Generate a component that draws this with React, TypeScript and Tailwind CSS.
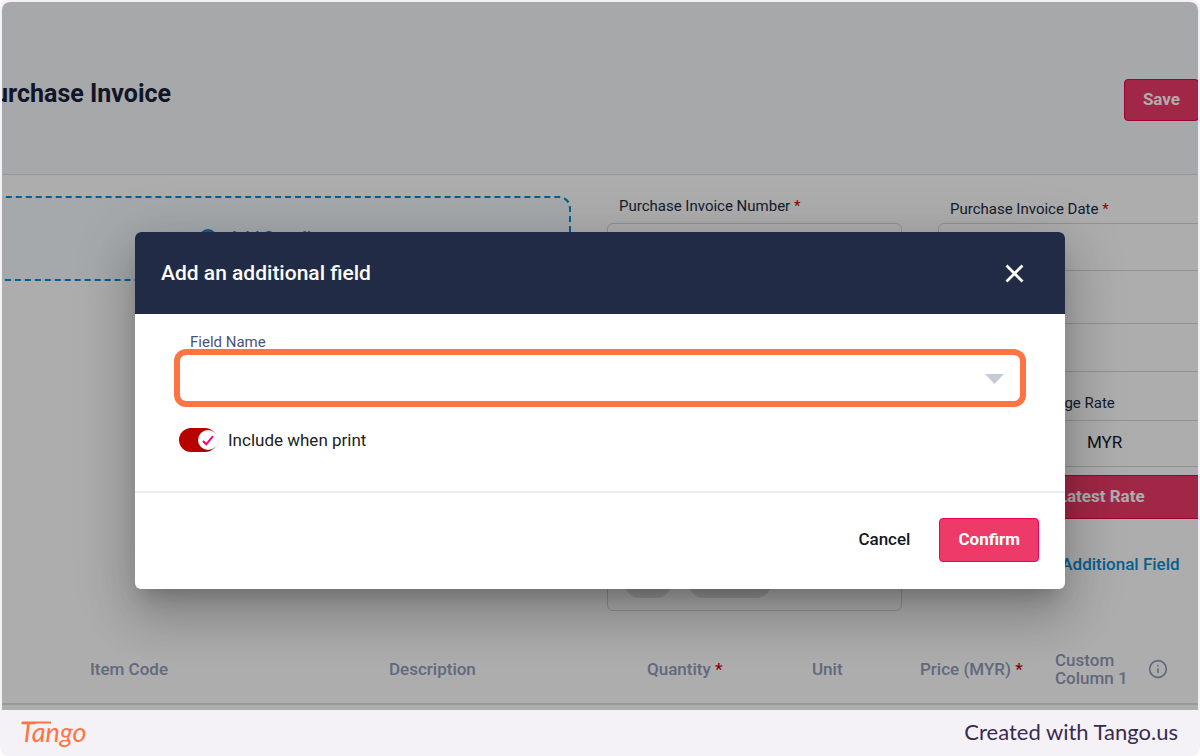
import { useState } from 'react';
import type { ReactNode } from 'react';
import { Info } from 'lucide-react';

type Column = { label: string; required?: boolean; info?: boolean; width: string };

const COLUMNS: Column[] = [
  { label: 'Item Code', width: 'w-[387px]' },
  { label: 'Description', width: 'w-[258px]' },
  { label: 'Quantity', required: true, width: 'w-[165px]' },
  { label: 'Unit', width: 'w-[108px]' },
  { label: 'Price (MYR)', required: true, width: 'w-[135px]' },
  { label: 'Custom Column 1', info: true, width: 'w-auto' },
];

function Required() {
  return <span className="text-[#c80000]"> *</span>;
}

function FieldLabel({ htmlFor, children }: { htmlFor: string; children: ReactNode }) {
  return (
    <label htmlFor={htmlFor} className="block px-3 text-[15px] leading-5 text-[#222b45]">
      {children}
    </label>
  );
}

const fieldBox = 'block w-full rounded-md border border-[#d5d8dc] bg-white px-3 text-[17px] text-[#14181f]';

function PageHeader() {
  return (
    <header className="flex h-[173px] items-start justify-between border-b border-[#dcdfe3] bg-[#f6f8fb]">
      <h1 className="-ml-6 pt-[74px] text-[25px] leading-9 font-bold text-[#1a2138]">Purchase Invoice</h1>
      <button className="-mr-px mt-[77px] h-[42px] rounded border border-[#e4004f] bg-[#ee3a68] px-[18px] text-[17px] font-bold text-white">
        Save
      </button>
    </header>
  );
}

function InvoiceForm() {
  return (
    <section className="grid grid-cols-[569fr_295fr_260fr] gap-x-9 pt-[21px]">
      <div>
        <button className="-ml-12 flex h-[85px] w-[calc(100%+48px)] items-center justify-center gap-3 rounded-xl border-2 border-dashed border-[#0d8ccf] bg-[#f3f9fe] pb-0.5 text-[17px] font-medium text-[#0d8ccf]">
          <span className="h-[18px] w-[18px] rounded-full bg-[#0d8ccf]" />
          Add Supplier
        </button>
      </div>

      <div className="flex flex-col justify-between">
        <div>
          <FieldLabel htmlFor="number">
            Purchase Invoice Number
            <Required />
          </FieldLabel>
          <input id="number" className={`${fieldBox} mt-[7px] h-12`} />
        </div>
        <div className="flex h-[88px] items-end gap-4 rounded-md border border-[#d5d8dc] px-4 pb-3">
          <span className="h-8 w-12 rounded-full bg-[#e0e0e0]" />
          <span className="h-8 w-[84px] rounded-full bg-[#e0e0e0]" />
        </div>
      </div>

      <div className="-mr-10 pt-[3px]">
        <FieldLabel htmlFor="date">
          Purchase Invoice Date
          <Required />
        </FieldLabel>
        <input id="date" className={`${fieldBox} mt-1 h-12`} />
        <input aria-label="Currency" className={`${fieldBox} mt-[52px] h-[49px]`} />
        <div className="mt-[21px] pl-[66px]">
          <FieldLabel htmlFor="rate">Exchange Rate</FieldLabel>
        </div>
        <input id="rate" defaultValue="MYR" className={`${fieldBox} mt-[7px] h-[47px] pb-1 pl-[148px]`} />
        <button className="mt-2 block h-11 w-full rounded border border-[#e4004f] bg-[#ee3a68] pl-[88px] text-left text-[17px] font-bold text-white">
          Get Latest Rate
        </button>
        <a href="#additional" className="mt-[33px] block pl-[75px] text-[17px] leading-6 font-medium text-[#0d8ccf]">
          + Add Additional Field
        </a>
        <div className="h-[35px]" />
      </div>
    </section>
  );
}

function ItemTable() {
  return (
    <table className="mt-[29px] w-full table-fixed border-b-2 border-[#dfe2e6] text-left text-[17px] leading-[18px] text-[#8f9bb8]">
      <thead>
        <tr className="h-[64px]">
          {COLUMNS.map((col, i) => (
            <th key={col.label} className={`pb-[5px] font-medium ${col.width} ${i === 0 ? 'pl-[88px]' : ''}`}>
              {col.info ? (
                <span className="flex items-center gap-5">
                  <span className="w-[73px]">{col.label}</span>
                  <Info size={20} strokeWidth={2} />
                </span>
              ) : (
                col.label
              )}
              {col.required && <Required />}
            </th>
          ))}
        </tr>
      </thead>
    </table>
  );
}

function AdditionalFieldDialog() {
  const [include, setInclude] = useState(true);

  return (
    <div
      role="dialog"
      aria-labelledby="dialog-title"
      className="w-full max-w-[930px] overflow-hidden rounded-md bg-white shadow-[0_14px_19px_-9px_rgba(0,0,0,0.2),0_30px_48px_4px_rgba(0,0,0,0.14),0_11px_58px_10px_rgba(0,0,0,0.12)]"
    >
      <div className="flex h-[82px] items-center justify-between bg-[#222b45] pr-[41px] pl-[26px] text-white">
        <h2 id="dialog-title" className="text-[21px] leading-7 font-medium">
          Add an additional field
        </h2>
        <button aria-label="Close">
          <svg width="19" height="19" viewBox="0 0 19 19" fill="none" stroke="currentColor" strokeWidth="2.8">
            <path d="M1.5 1.5l16 16M17.5 1.5l-16 16" />
          </svg>
        </button>
      </div>

      <div className="h-[179px] border-b-2 border-[#e8edf3] px-[39px] pt-[19px]">
        <label htmlFor="field-name" className="block px-4 text-[15px] leading-[18px] text-[#4a5478]">
          Field Name
        </label>
        <div className="relative -mt-0.5">
          <select
            id="field-name"
            className="block h-[58px] w-full appearance-none rounded-xl border-6 border-[#ff7442] bg-white px-4 outline-none"
          />
          <svg className="pointer-events-none absolute top-[25px] right-[22px]" width="19" height="10" viewBox="0 0 19 10">
            <path d="M0 0h19l-9.500 10z" fill="#c5cad3" />
          </svg>
        </div>
        <label className="mt-[21px] ml-[5px] flex w-fit items-center gap-[11px] text-[17px] leading-6 text-[#222]">
          <span className="relative flex">
            <input
              type="checkbox"
              checked={include}
              onChange={(e) => setInclude(e.target.checked)}
              className="peer h-6 w-[38px] appearance-none rounded-full bg-[#c5cad3] checked:bg-[#b70000]"
            />
            <span className="pointer-events-none absolute top-[2px] left-[2px] flex h-5 w-5 items-center justify-center rounded-full bg-white shadow-sm peer-checked:left-[19px]">
              {include && (
                <svg width="12" height="11" viewBox="0 0 12 11" fill="none" stroke="#f50078" strokeWidth="2">
                  <path d="M1 6l3.200 3.300L11 1.200" />
                </svg>
              )}
            </span>
          </span>
          Include when print
        </label>
      </div>

      <div className="flex items-center justify-end gap-[9px] pt-[25px] pr-[26px] pb-[27px] text-[17px]">
        <button className="h-11 px-5 font-medium text-[#14181f]">Cancel</button>
        <button className="h-11 rounded border border-[#f0004f] bg-[#ee3a68] px-[18px] font-bold text-white">Confirm</button>
      </div>
    </div>
  );
}

export default function App() {
  return (
    <div className="bg-white font-['Roboto',sans-serif]">
      <div className="overflow-hidden rounded-lg bg-[#f4f2f7] pt-0.5">
        <main className="relative mx-0.5 overflow-hidden rounded-t-lg bg-white pb-[5px]">
          <PageHeader />
          <InvoiceForm />
          <ItemTable />
          <div className="absolute inset-0 flex items-start justify-center bg-black/32 px-4 pt-[230px]">
            <AdditionalFieldDialog />
          </div>
        </main>

        <footer className="flex h-[46px] items-center justify-between pr-[22px] pb-0.5 pl-5">
          <span className="relative font-['Lato',sans-serif] text-[27px] leading-8 text-[#ff7442] italic">
            Tango
            <svg className="absolute top-1 left-0.5" width="30" height="4" viewBox="0 0 30 4" fill="none" stroke="currentColor" strokeWidth="2">
              <path d="M0 2.500h29" />
            </svg>
          </span>
          <span className="font-['Lato',sans-serif] text-[22px] leading-7 text-[#3b2a4f]">Created with Tango.us</span>
        </footer>
      </div>
    </div>
  );
}
